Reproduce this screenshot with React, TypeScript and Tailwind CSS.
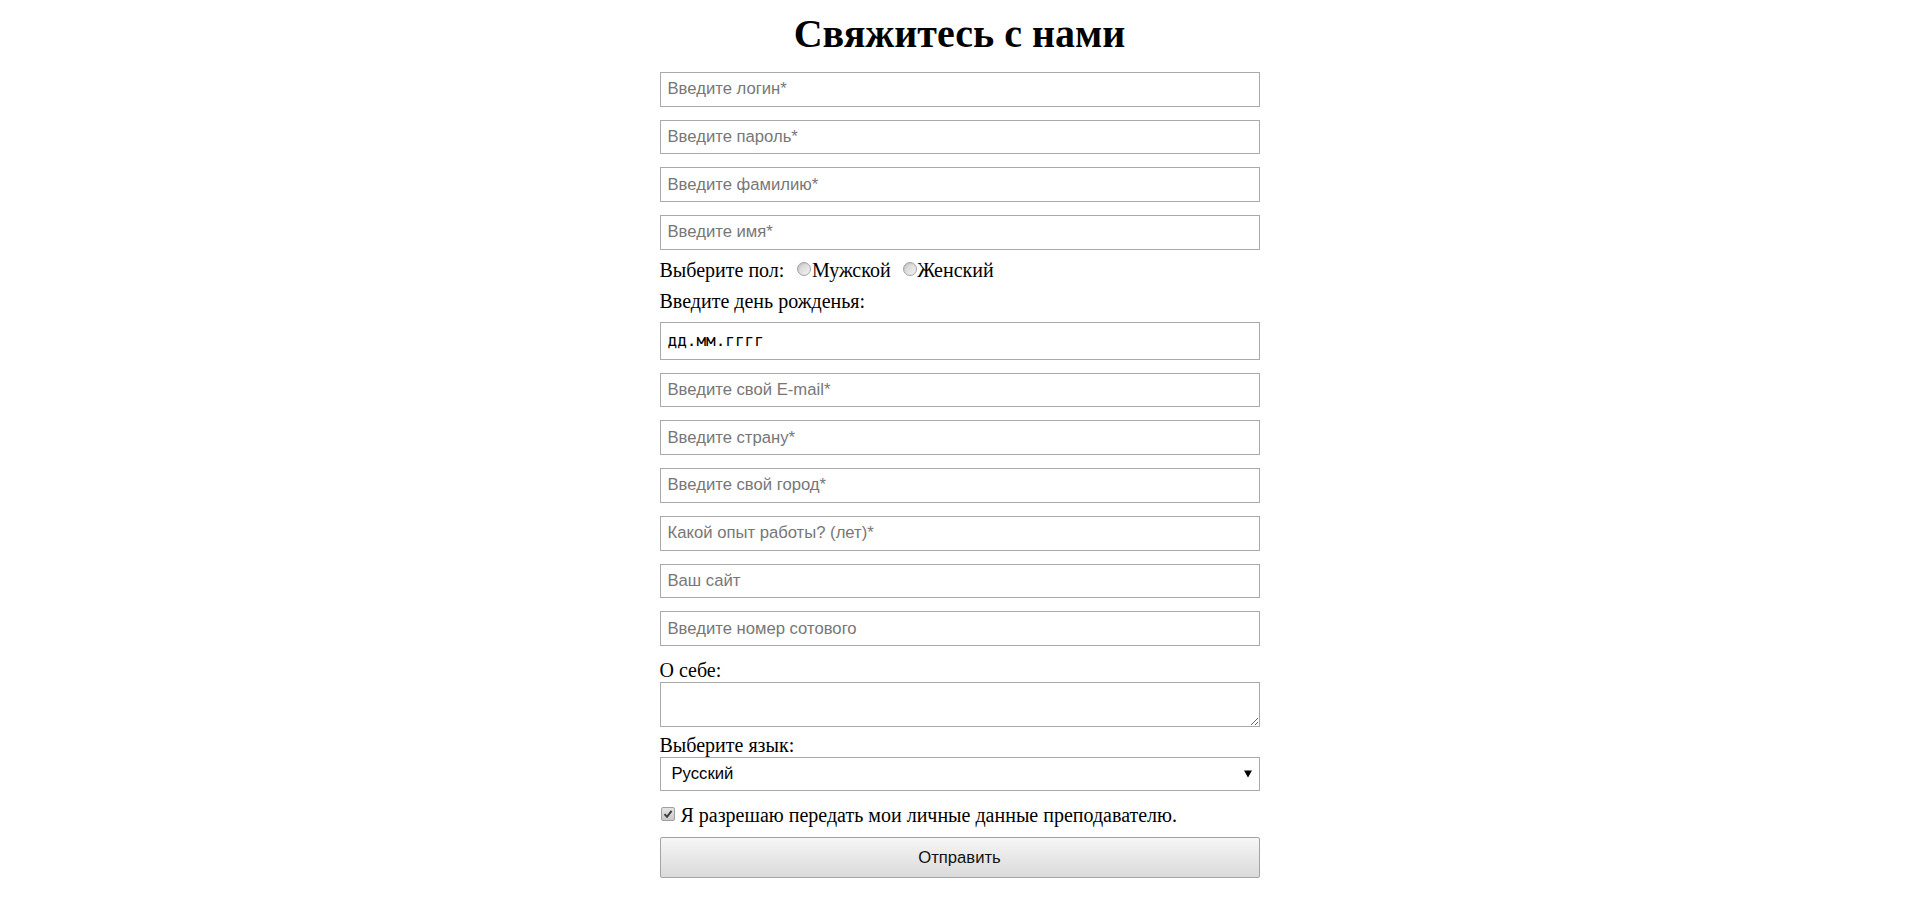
import React from "react";

const inputCls =
  "block w-full h-[34.7px] border border-[#a9a9a9] bg-white px-[7px] text-[16.67px] text-black font-['Liberation_Sans',Arial,sans-serif] outline-none placeholder:text-[#777]";

function Radio({ className = "" }: { className?: string }) {
  return (
    <span
      className={
        "inline-block w-[14px] h-[14px] rounded-full border border-[#a3a3a3] bg-linear-to-br from-[#cdcdcd] to-[#f4f4f4] shadow-[inset_1px_1px_1px_rgba(0,0,0,0.08)] align-[1px] " +
        className
      }
    />
  );
}

export default function App() {
  const top = [
    "Введите логин*",
    "Введите пароль*",
    "Введите фамилию*",
    "Введите имя*",
  ];
  const mid = [
    "Введите свой E-mail*",
    "Введите страну*",
    "Введите свой город*",
    "Какой опыт работы? (лет)*",
    "Ваш сайт",
    "Введите номер сотового",
  ];
  return (
    <div className="min-h-screen bg-white text-black font-['Liberation_Serif','Times_New_Roman',serif]">
      <div className="w-[600px] mx-auto pt-[11px]">
        <h1 className="text-center text-[40px] leading-[46px] font-bold">
          Свяжитесь с нами
        </h1>
        <div className="mt-[15px] flex flex-col gap-[13px]">
          {top.map((p) => (
            <input key={p} className={inputCls} placeholder={p} />
          ))}
        </div>
        <div className="mt-[9.5px] h-[23px] leading-[23px] text-[20px] whitespace-nowrap">
          Выберите пол:
          <Radio className="ml-[13px]" />
          <span className="ml-[0.5px]">Мужской</span>
          <Radio className="ml-[12px]" />
          <span className="ml-[0.5px]">Женский</span>
        </div>
        <div className="mt-[7.5px] h-[23px] leading-[23px] text-[20px]">
          Введите день рожденья:
        </div>
        <input
          readOnly
          defaultValue="дд.мм.гггг"
          className="mt-[9px] block w-full h-[38px] border border-[#a9a9a9] bg-white px-[7px] text-[16px] text-black font-['DejaVu_Sans_Mono','Liberation_Mono',monospace] outline-none"
        />
        <div className="mt-[13px] flex flex-col gap-[13px]">
          {mid.map((p) => (
            <input key={p} className={inputCls} placeholder={p} />
          ))}
        </div>
        <div className="mt-[13px] h-[23px] leading-[23px] text-[20px]">О себе:</div>
        <textarea className="block w-full h-[45px] border border-[#a9a9a9] bg-white outline-none" />
        <div className="mt-[7px] h-[23px] leading-[23px] text-[20px]">Выберите язык:</div>
        <div className="relative">
          <select className="block w-full h-[33.7px] appearance-none border border-[#a9a9a9] bg-white pl-[11px] text-[16.67px] text-black font-['Liberation_Sans',Arial,sans-serif] outline-none">
            <option>Русский</option>
            <option>English</option>
          </select>
          <svg
            className="pointer-events-none absolute right-[8px] top-[13px]"
            width="8"
            height="8"
            viewBox="0 0 8 8"
          >
            <path d="M0 0.5 L8 0.5 L4 7.5 Z" fill="#000" />
          </svg>
        </div>
        <div className="mt-[13.5px] flex items-start h-[23px] leading-[23px] text-[20px]">
          <span className="mt-[3px] ml-[1px] flex items-center justify-center w-[14px] h-[14px] rounded-[2px] border border-[#a0a0a0] bg-linear-to-b from-[#e4e4e4] to-[#c9c9c9]">
            <svg width="10" height="10" viewBox="0 0 10 10">
              <path
                d="M1.5 5.2 L4 7.8 L8.6 1.8"
                fill="none"
                stroke="#3a3a3a"
                strokeWidth="1.9"
              />
            </svg>
          </span>
          <span className="ml-[6px]">
            Я разрешаю передать мои личные данные преподавателю.
          </span>
        </div>
        <button className="mt-[9.6px] block w-full h-[41px] border border-[#a3a3a3] rounded-[2px] bg-linear-to-b from-[#f6f6f6] to-[#dadada] text-[16.67px] text-[#111] font-['Liberation_Sans',Arial,sans-serif]">
          Отправить
        </button>
      </div>
    </div>
  );
}
